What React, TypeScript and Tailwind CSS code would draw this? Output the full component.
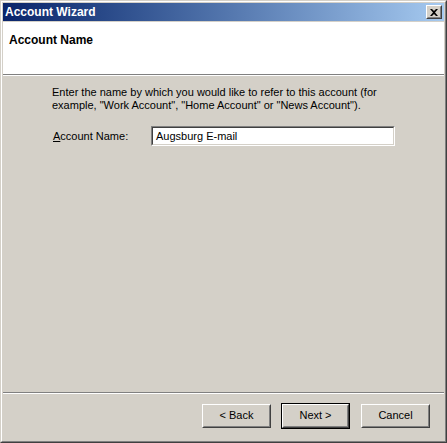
const raised = "border border-t-white border-l-white border-r-[#404040] border-b-[#404040]"
const raisedInner = "border border-t-[#d4d0c8] border-l-[#d4d0c8] border-r-[#808080] border-b-[#808080]"

function Btn({ label, primary }: { label: string; primary?: boolean }) {
  const body = (
    <div className={`${raised} w-full h-full bg-[#d4d0c8]`}>
      <div className={`${raisedInner} w-full h-full flex items-center justify-center text-[11px] text-black`}>
        {label}
      </div>
    </div>
  )
  if (primary) {
    return <div className="w-[69px] h-[26px] border border-black">{body}</div>
  }
  return <div className="w-[69px] h-[24px]">{body}</div>
}

export default function App() {
  return (
    <div className="w-[447px] h-[443px] bg-[#d4d0c8] border border-t-[#d4d0c8] border-l-[#d4d0c8] border-r-[#404040] border-b-[#404040]"
      style={{ fontFamily: '"Liberation Sans", Arial, sans-serif' }}>
      <div className="w-full h-full border border-t-white border-l-white border-r-[#808080] border-b-[#808080] p-px flex flex-col">
        {/* title bar */}
        <div className="h-[18px] shrink-0 flex items-center justify-between pl-[2px] pr-[2px] bg-gradient-to-r from-[#0a246a] to-[#a6caf0]">
          <span className="text-white font-bold text-[12px] leading-none">Account Wizard</span>
          <div className={`${raised} w-[16px] h-[14px] bg-[#d4d0c8]`}>
            <div className={`${raisedInner} w-full h-full flex items-center justify-center`}>
              <svg width="8" height="7" viewBox="0 0 8 7">
                <path d="M0 0h2l2 2 2-2h2L5 3.5 8 7H6L4 5 2 7H0l3-3.5z" fill="#000" />
              </svg>
            </div>
          </div>
        </div>
        <div className="h-px shrink-0" />
        {/* header */}
        <div className="h-[52px] shrink-0 bg-white pl-[6px] pt-[12px]">
          <h1 className="text-[12px] font-bold text-black leading-[13px]">Account Name</h1>
        </div>
        <div className="h-px shrink-0 bg-[#808080]" />
        <div className="h-px shrink-0 bg-white" />
        {/* body */}
        <div className="flex-1 pl-[49px] pr-[40px] pt-[10px] text-[11px] leading-[13px] text-black">
          <p>Enter the name by which you would like to refer to this account (for example, "Work Account", "Home Account" or "News Account").</p>
          <div className="flex items-center mt-[14px]">
            <label className="w-[99px] pl-px"><span className="underline">A</span>ccount Name:</label>
            <div className="w-[244px] h-[20px] border border-t-[#808080] border-l-[#808080] border-r-white border-b-white">
              <div className="w-full h-full border border-t-[#404040] border-l-[#404040] border-r-[#d4d0c8] border-b-[#d4d0c8] bg-white flex items-center pl-[3px]">
                Augsburg E-mail
              </div>
            </div>
          </div>
        </div>
        <div className="h-px shrink-0 bg-[#808080]" />
        <div className="h-px shrink-0 bg-white" />
        {/* footer */}
        <div className="h-[46px] shrink-0 flex items-center justify-end pr-[14px] pb-[3px] gap-[10px]">
          <Btn label="< Back" />
          <Btn label="Next >" primary />
          <div className="ml-px"><Btn label="Cancel" /></div>
        </div>
      </div>
    </div>
  )
}
